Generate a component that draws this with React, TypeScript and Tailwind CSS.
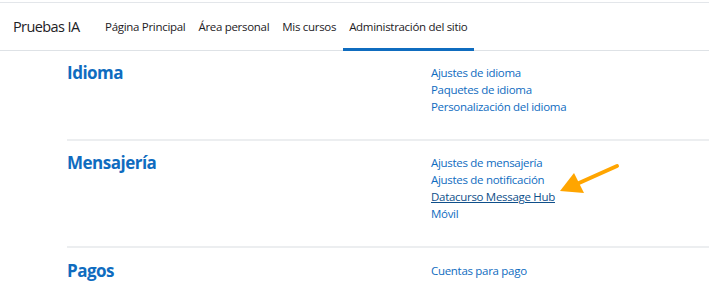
import React from "react";

type Section = { title: string; links: { label: string; underline?: boolean }[] };

const sections: Section[] = [
  {
    title: "Idioma",
    links: [
      { label: "Ajustes de idioma" },
      { label: "Paquetes de idioma" },
      { label: "Personalización del idioma" },
    ],
  },
  {
    title: "Mensajería",
    links: [
      { label: "Ajustes de mensajería" },
      { label: "Ajustes de notificación" },
      { label: "Datacurso Message Hub", underline: true },
      { label: "Móvil" },
    ],
  },
  {
    title: "Pagos",
    links: [{ label: "Cuentas para pago" }],
  },
];

const navItems = ["Página Principal", "Área personal", "Mis cursos", "Administración del sitio"];

export default function App() {
  return (
    <div className="relative w-[709px] h-[291px] overflow-hidden bg-white font-['Open_Sans',sans-serif] text-[#1d2125]">
      <div className="h-[3px] border-b border-[#e3e6ea]" />
      {/* navbar */}
      <nav className="flex items-stretch h-[48px] border-b border-[#dee2e6] pl-[13px]">
        <span className="flex items-center text-[14.5px] mr-[19px] tracking-[-0.6px]">Pruebas IA</span>
        <ul className="flex items-stretch">
          {navItems.map((item, i) => (
            <li
              key={item}
              className={
                i === navItems.length - 1
                  ? "flex items-center px-[6.5px] text-[11.5px] tracking-[-0.3px] border-b-[3px] border-[#0f6cbf] pt-[3px] -mb-px"
                  : "flex items-center px-[6.5px] text-[11.5px] tracking-[-0.3px]"
              }
            >
              {item}
            </li>
          ))}
        </ul>
      </nav>

      {/* admin categories */}
      <div className="ml-[67px]">
        {sections.map((s, i) => (
          <section
            key={s.title}
            className={
              i < sections.length - 1
                ? "flex pt-[12px] pb-[24px] border-b-2 border-[#eceef0]"
                : "flex pt-[13px] pb-[24px]"
            }
          >
            <h2 className="w-[364px] text-[17px] font-bold leading-[20px] text-[#0f6cbf] tracking-[-0.5px]">
              {s.title}
            </h2>
            <ul className="flex flex-col pt-[1px]">
              {s.links.map((l) => (
                <li
                  key={l.label}
                  className={
                    l.underline
                      ? "text-[11.5px] leading-[17px] text-[#0f4f8a] underline tracking-[-0.3px]"
                      : "text-[11.5px] leading-[17px] text-[#0f6cbf] tracking-[-0.3px]"
                  }
                >
                  {l.label}
                </li>
              ))}
            </ul>
          </section>
        ))}
      </div>

      {/* annotation arrow */}
      <svg className="absolute left-[555px] top-[160px]" width="70" height="38" viewBox="0 0 70 38">
        <line x1="62" y1="6" x2="24" y2="23" stroke="#ffa500" strokeWidth="4" strokeLinecap="round" />
        <polygon points="5,31 19,13 29,33" fill="#ffa500" />
      </svg>
    </div>
  );
}
